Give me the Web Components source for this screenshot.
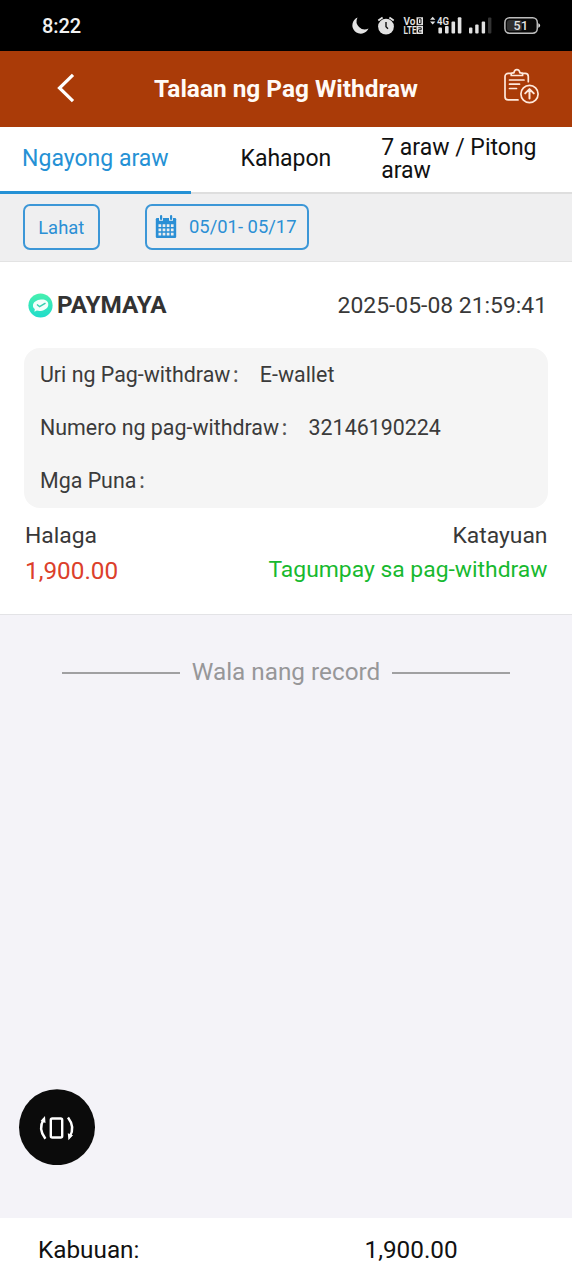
<!DOCTYPE html>
<html lang="fil"><head><meta charset="utf-8"><title>Talaan ng Pag Withdraw</title>
<style>
html,body{margin:0;height:100%}
body{font-family:Roboto,"Noto Sans CJK SC",sans-serif;background:#f4f3f8;overflow:hidden}
</style></head><body>
<withdraw-page></withdraw-page>
<script>
const define=(name,html)=>{
  const t=document.createElement('template');t.innerHTML=html;
  customElements.define(name,class extends HTMLElement{
    constructor(){super();this.attachShadow({mode:'open'}).append(t.content.cloneNode(true));}
  });
};

define('status-bar',`<style>
:host{display:flex;height:51px;box-sizing:border-box;background:#000;color:#f2f2f2;justify-content:space-between}
time{font-size:20px;line-height:24px;margin:14px 0 0 42px;font-weight:500;letter-spacing:-.1px}
svg{display:block;width:232px;height:51px}
text{fill:#e4e4e4;font-family:Roboto,sans-serif}
</style><time>8:22</time>
<svg viewBox="0 0 232 51" fill="#e2e2e2">
<path d="M17.500 17.500a8.400 8.400 0 1 0 11 11A8.200 8.200 0 0 1 17.500 17.500Z"/>
<circle cx="46" cy="26.600" r="7.900"/><path d="M38.300 20.500l4.300-3M53.700 20.500l-4.300-3" stroke="#e2e2e2" stroke-width="1.800"/><path d="M46 22v4.800l2 2" fill="none" stroke="#111" stroke-width="1.400"/>
<text x="63.500" y="24.700" font-size="10" font-weight="600" textLength="12" lengthAdjust="spacingAndGlyphs">Vo</text><text x="63.500" y="33.700" font-size="10" font-weight="600" textLength="13" lengthAdjust="spacingAndGlyphs">LTE</text>
<path d="M76.500 17.200h6.500v8h-6.500zM76.500 26h6.500v8h-6.500z"/><path d="M78.500 18.800h2.500v4.800h-2.500zM78.200 27.800h3v1.900h-2.700v2.400h3" fill="none" stroke="#111" stroke-width="1"/>
<path d="M90 19.800l2.700-3 2.700 3zM90 21.500h5.400l-2.700 3z"/><text x="97" y="24.700" font-size="10.500" font-weight="600" textLength="12" lengthAdjust="spacingAndGlyphs">4G</text>
<rect x="98.400" y="27.500" width="3.600" height="6" rx="1"/><rect x="105" y="26" width="3.600" height="7.500" rx="1"/><rect x="111.500" y="21.500" width="3.600" height="12" rx="1"/><rect x="117.800" y="17.200" width="3.600" height="16.300" rx="1"/>
<rect x="129" y="27.500" width="3.400" height="6" rx="1"/><rect x="135.200" y="24.500" width="3.400" height="9" rx="1"/><rect x="141.700" y="21.500" width="3.400" height="12" rx="1"/><rect x="148" y="17.500" width="3.400" height="16" rx="1" fill="#343434"/>
<rect x="164.900" y="17.800" width="32.400" height="15.400" rx="4.600" fill="#080808" stroke="#bdbdbd" stroke-width="1.500"/><rect x="167" y="20" width="15" height="11" rx="2.500" fill="#303030"/><path d="M198.300 23.200q1.800.4 1.800 2.300t-1.800 2.300z"/>
<text x="173.500" y="30" font-size="12.500" font-weight="500" textLength="14.500">51</text>
</svg>`);

define('title-bar',`<style>
:host{display:grid;grid-template-columns:90px 1fr 90px;align-items:center;height:76px;background:#aa3b08;color:#fffaf6}
h1{margin:-1px 0 0;font-size:24.400px;line-height:28px;font-weight:700;text-align:center;white-space:nowrap}
svg{display:block}.back{margin:-2px 0 0 54px}.rec{margin-left:19.500px;margin-top:-4px}
</style>
<svg class="back" width="24" height="32" viewBox="0 0 24 32"><path d="M19 2.800 5.500 16 19 29.200" fill="none" stroke="#fff" stroke-width="3.200"/></svg>
<h1><slot></slot></h1>
<svg class="rec" width="40" height="40" viewBox="0 0 40 40" fill="none" stroke="#ffe9dc" stroke-width="1.700" stroke-linecap="round" stroke-linejoin="round">
<path d="M9 6.300H6.200A3.200 3.200 0 0 0 3 9.500v20.200a3.200 3.200 0 0 0 3.200 3.200H16M20.500 6.300h2.600a3.200 3.200 0 0 1 3.200 3.200v5.200"/>
<path d="M9.200 8.500v-1.200q0-1.500 1.700-1.500h1q.5-3.200 3-3.200t3 3.200h1q1.700 0 1.700 1.500v1.200Z"/>
<path d="M7.500 13h14.500M7.500 17.200h10M7.500 21.500h7"/><circle cx="27.500" cy="27" r="8.600"/><path d="M27.500 31.600v-9M23.200 26.400l4.300-4.300 4.300 4.300" stroke-width="2"/></svg>`);

define('day-tab',`<style>
:host{display:flex;align-items:center;justify-content:center;box-sizing:border-box;height:67px;font-size:23px;line-height:23px;color:#111;border-bottom:2px solid #dedede;padding-bottom:2px}
:host([active]){color:#2591d5;border-bottom:3px solid #2591d5;padding-bottom:1px}
:host([wrap]){padding:0 20px 2px 0;justify-content:flex-start}
</style><span><slot></slot></span>`);

define('filter-chip',`<style>
:host{display:flex;align-items:center;justify-content:center;box-sizing:border-box;height:46px;border:2px solid #3c97d7;border-radius:7px;color:#2b8fd5;font-size:18.400px;line-height:22px;white-space:nowrap}
</style><slot></slot>`);

define('calendar-icon',`<style>:host{display:block}svg{display:block}</style>
<svg width="22" height="24" viewBox="0 0 22 24"><rect x=".8" y="3" width="20.400" height="20" rx="1.200" fill="#2b8fd5"/><path d="M4 1.200h4v4.600H4zM14 1.200h4v4.600h-4z" fill="#eee"/><rect x="5" y="0" width="2.200" height="5" rx="1.100" fill="#2b8fd5"/><rect x="15" y="0" width="2.200" height="5" rx="1.100" fill="#2b8fd5"/>
<path d="M3.500 10.700h15.100M3.500 14.900h15.100M3.500 19.100h15.100" stroke="#eee" stroke-width="2.800" stroke-dasharray="2.700 1.430"/></svg>`);

define('info-row',`<style>
:host{display:flex;height:53.300px;align-items:center;font-size:21.400px;line-height:26px;color:#3b3b3b;white-space:nowrap}
.c{display:inline-block;width:21px;font-size:18px;line-height:20px;color:#555;text-indent:1px}
.v{margin-left:8.500px}
</style><span><slot name="label"></slot><span class="c">：</span></span><span class="v"><slot></slot></span>`);

define('withdraw-record',`<style>
:host{display:block;box-sizing:border-box;height:354px;background:#fff;border-top:1px solid #e3e3e3;border-bottom:1.500px solid #e3e3e6;padding:0 25px;color:#383838;font-size:22.880px;line-height:28px}
.head{display:flex;justify-content:space-between;align-items:center;height:86px}
.brand{display:flex;align-items:center;gap:4px;font-weight:700;font-size:24.300px;color:#333;margin-left:3px}
.date{padding-top:2px}
.box{background:#f5f5f5;border-radius:16px;height:160px;box-sizing:border-box;padding:0 16px;margin:0 -1px}
.foot{display:flex;justify-content:space-between;padding-top:14px}
.foot div{display:grid}.r{text-align:right;margin-right:-.5px}
.amt{color:#dc402b;font-size:24.300px;line-height:28px;margin-top:7px}.ok{color:#17b92f;margin-top:5px}
</style>
<div class="head"><div class="brand"><svg width="25" height="25" viewBox="0 0 25 25"><defs><linearGradient id="g" x2="0" y2="1"><stop stop-color="#47f0ae"/><stop offset="1" stop-color="#20dccb"/></linearGradient></defs><circle cx="12.500" cy="12.500" r="12.100" fill="url(#g)"/><path d="M5 13.500C4.500 9 9 7 13 6.600s7.300 1.500 7.300 4.900-3.400 6-7.700 6.400c-1.600.2-2.800-.1-3.700-.4L6.400 18.800l.4-2.700q-1.500-1-1.800-2.600Z" fill="#f2fffb"/><path d="M9 11.500l2.600 2.200 5.900-3.600" fill="none" stroke="#35cfb0" stroke-width="1.500"/></svg><span>PAYMAYA</span></div><span class="date">2025-05-08 21:59:41</span></div>
<div class="box"><info-row><span slot="label">Uri ng Pag-withdraw</span>E-wallet</info-row><info-row><span slot="label">Numero ng pag-withdraw</span>32146190224</info-row><info-row><span slot="label">Mga Puna</span></info-row></div>
<div class="foot"><div><span>Halaga</span><span class="amt">1,900.00</span></div><div class="r"><span>Katayuan</span><span class="ok">Tagumpay sa pag-withdraw</span></div></div>`);

define('list-end',`<style>
:host{display:flex;align-items:center;justify-content:center;gap:12px;color:#979799;font-size:24.300px;line-height:30px;padding-top:42px}
i{width:117.500px;height:2px;background:#a0a0a2;margin-top:2px}
</style><i></i><span><slot></slot></span><i></i>`);

define('rotate-button',`<style>
:host{display:block;position:absolute;left:19px;top:1089px;width:76px;height:76px}svg{display:block}
</style><svg width="76" height="76" viewBox="0 0 76 76"><circle cx="38" cy="38.200" r="38" fill="#0b0b0b"/><g fill="none" stroke="#fff"><rect x="31.800" y="29.500" width="11.400" height="19" rx="1.500" stroke-width="2.400"/><path d="M26.400 49.700Q18.700 39.900 24.700 30.400M49 28.400Q56.500 38.200 50.700 47.700" stroke-width="2.500"/></g><path d="M21.500 32l4.500-5 .5 7zM54 46.200l-4.600 5-.6-7z" fill="#fff"/></svg>`);

define('total-bar',`<style>
:host{display:grid;grid-template-columns:326.500px 1fr;align-items:center;box-sizing:border-box;height:62px;background:#fff;color:#111;padding:1px 0 0 38px;font-size:24.300px;line-height:28px}
</style><span><slot></slot></span><span class="amount"><slot name="amount"></slot></span>`);

define('withdraw-page',`<style>
:host{display:flex;flex-direction:column;width:572px;height:1280px;position:relative;background:#f4f3f8}
.tabs{display:grid;grid-template-columns:190.600px 190.600px 1fr;background:#fff}
.filters{display:flex;gap:45px;height:67px;box-sizing:border-box;background:#efeff0;padding:10px 23px}
.all{width:76.500px;padding-top:2px}.date{width:164px;justify-content:flex-start;padding-left:8px}.date calendar-icon{margin-right:12.500px}.date span{margin-top:-1px}
main{flex:1}
</style><status-bar></status-bar><title-bar>Talaan ng Pag Withdraw</title-bar>
<div class="tabs"><day-tab active>Ngayong araw</day-tab><day-tab>Kahapon</day-tab><day-tab wrap>7 araw / Pitong araw</day-tab></div>
<div class="filters"><filter-chip class="all">Lahat</filter-chip><filter-chip class="date"><calendar-icon></calendar-icon><span>05/01- 05/17</span></filter-chip></div>
<main><withdraw-record></withdraw-record><list-end>Wala nang record</list-end></main>
<total-bar>Kabuuan:<span slot="amount">1,900.00</span></total-bar><rotate-button></rotate-button>`);
</script></body></html>
